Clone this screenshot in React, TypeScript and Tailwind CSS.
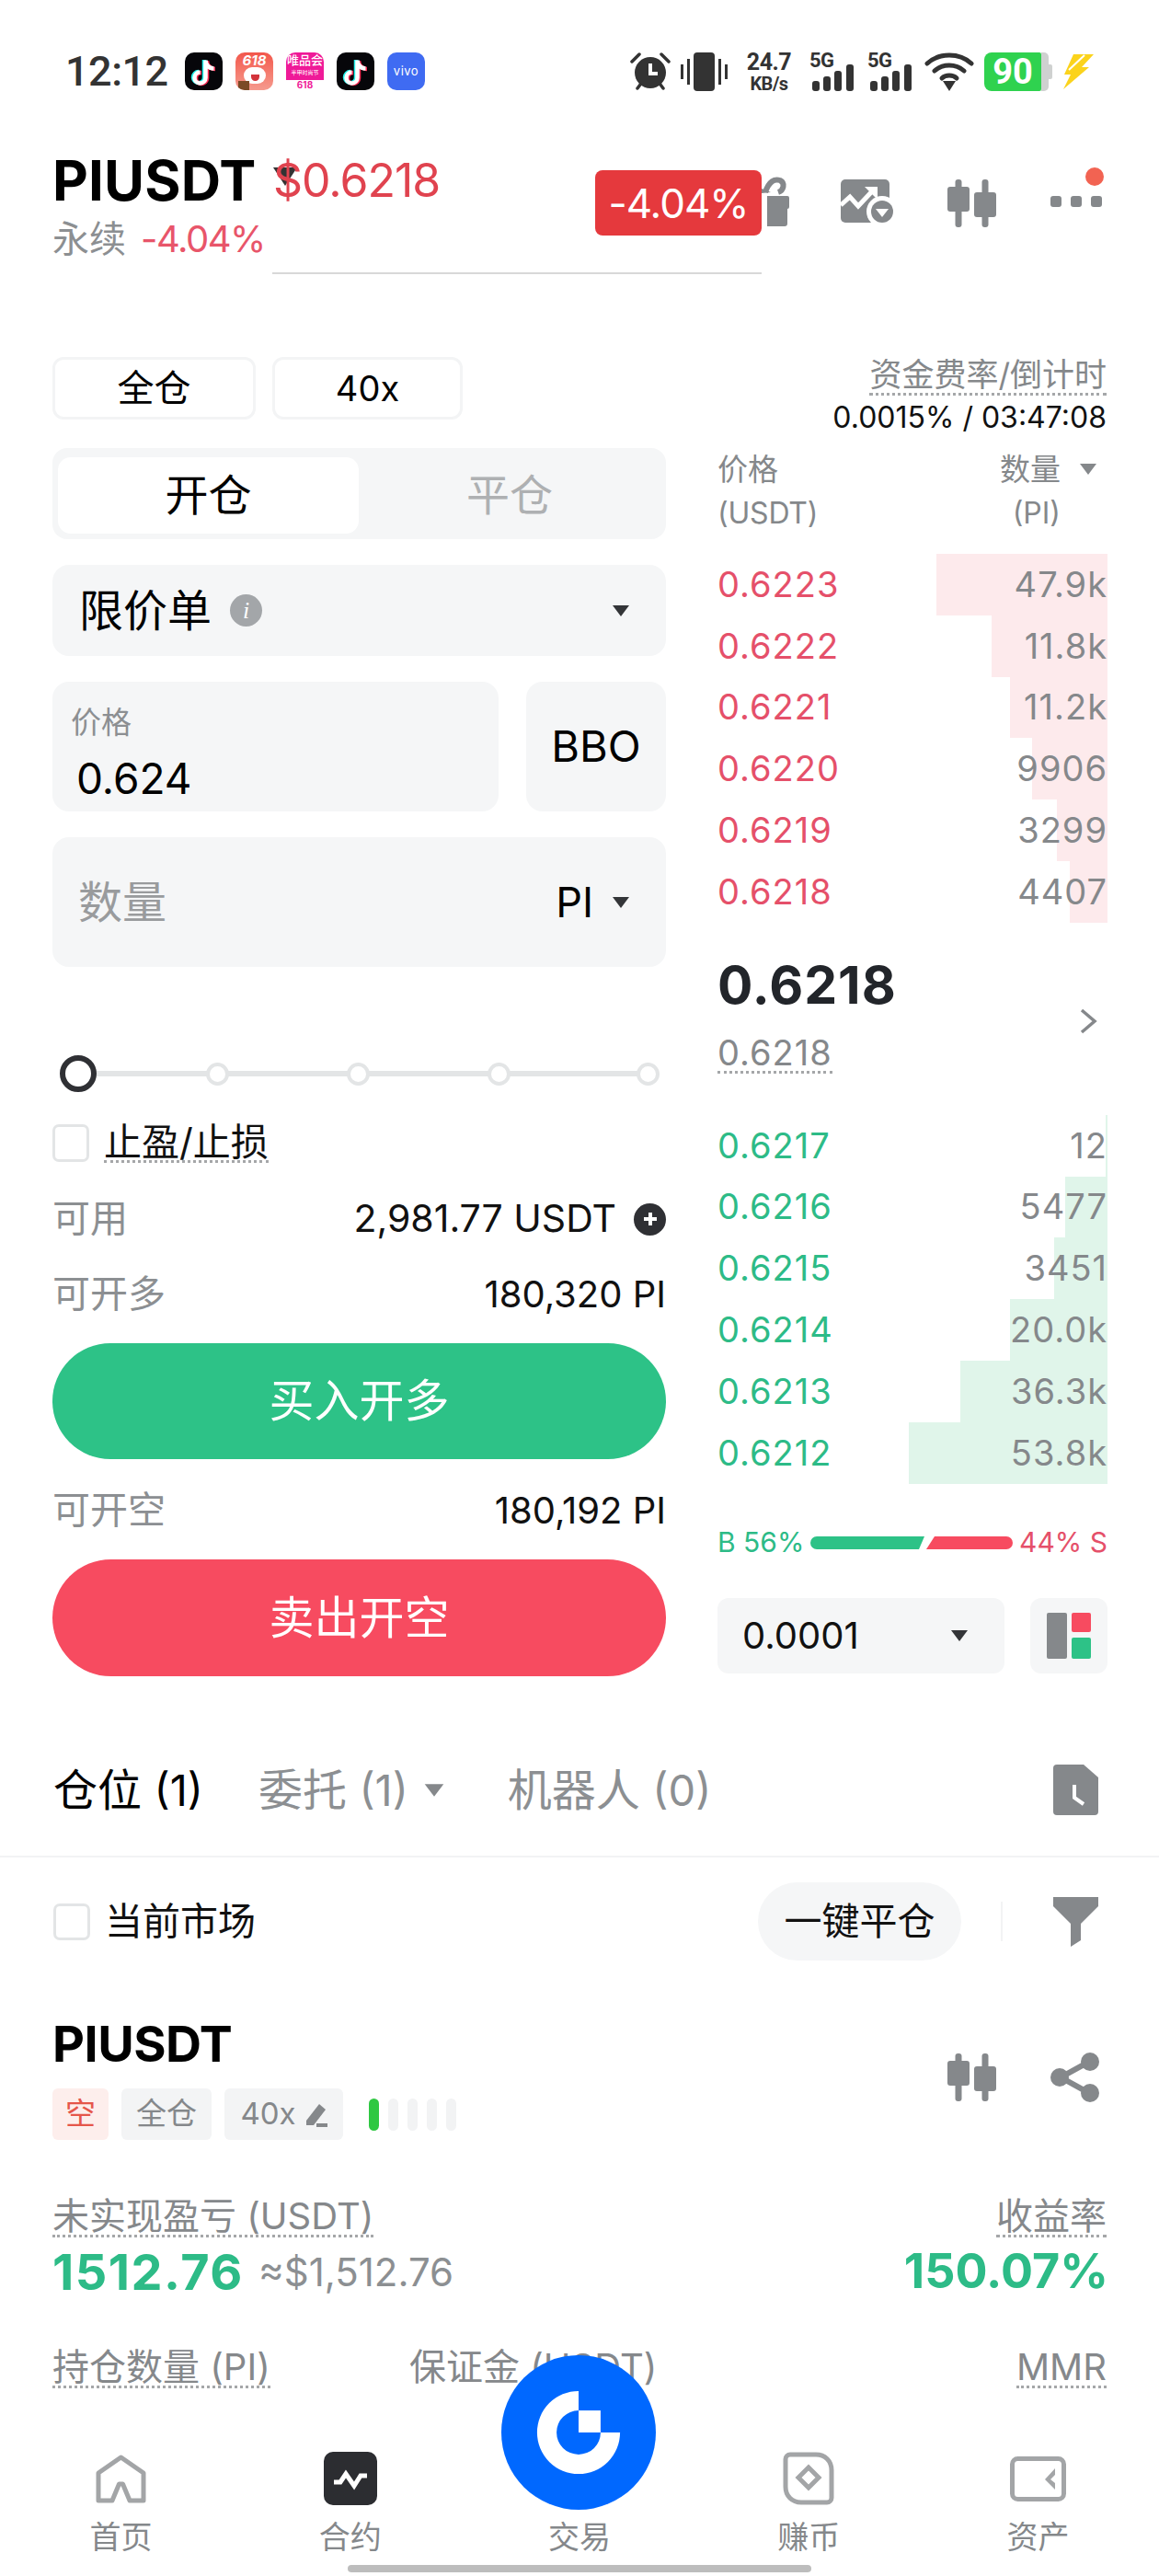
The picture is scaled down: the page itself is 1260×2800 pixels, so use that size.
import React from "react";

const Tiktok = () => (
  <svg width="41" height="41" viewBox="0 0 41 41" className="shrink-0">
    <rect width="41" height="41" rx="10" fill="#06060a" />
    <g fill="none" strokeWidth="4.5">
      <path d="M21 8V27a6 6 0 1 1-6-6M21 8c0 5 4 9 9 9" stroke="#25f4ee" />
      <path d="M24 9V28a6 6 0 1 1-6-6M24 9c0 5 4 9 9 9" stroke="#fe2c55" />
      <path d="M22.5 8.5V27.5a6 6 0 1 1-6-6M22.5 8.5c0 5 4 9 9 9" stroke="#fff" />
    </g>
  </svg>
);

const Candle = () => (
  <svg width="54" height="52" viewBox="0 0 54 52" fill="#85888b" className="shrink-0">
    <rect x="8.5" y="0" width="7" height="52" rx="3" />
    <rect x="0" y="8" width="24" height="27" rx="3" />
    <rect x="37.5" y="0" width="7" height="52" rx="3" />
    <rect x="29" y="14" width="24" height="27" rx="3" />
  </svg>
);

const Caret = ({ c = "#333538", w = 20, h = 14 }: { c?: string; w?: number; h?: number }) => (
  <svg width={w} height={h} viewBox="0 0 20 14" className="shrink-0">
    <path d="M1 1H19L10 13Z" fill={c} />
  </svg>
);

const Check = ({ s = "w-[40px] h-[41px]" }: { s?: string }) => (
  <div className={`${s} border-[3px] border-[#e3e5e6] rounded-[7px] shrink-0`} />
);

const asks = [
  ["0.6223", "47.9k", 186],
  ["0.6222", "11.8k", 126],
  ["0.6221", "11.2k", 106],
  ["0.6220", "9906", 82],
  ["0.6219", "3299", 55],
  ["0.6218", "4407", 41],
] as const;
const bids = [
  ["0.6217", "12", 2],
  ["0.6216", "5477", 46],
  ["0.6215", "3451", 58],
  ["0.6214", "20.0k", 106],
  ["0.6213", "36.3k", 160],
  ["0.6212", "53.8k", 216],
] as const;

const Row = ({ p, q, w, ask }: { p: string; q: string; w: number; ask: boolean }) => (
  <div className="relative h-[66.8px] flex items-center justify-between">
    <div
      className={`absolute right-0 top-0 bottom-0 ${ask ? "bg-[#fdeaec]" : "bg-[#e0f5ea]"}`}
      style={{ width: w }}
    />
    <span className={`relative text-[38px] tracking-[1px] ${ask ? "text-[#e5506a]" : "text-[#2dbb87]"}`}>{p}</span>
    <span className="relative text-[38px] tracking-[1px] text-[#85888b]">{q}</span>
  </div>
);

const Info = ({ l, v, extra, small }: { l: string; v: string; extra?: React.ReactNode; small?: boolean }) => (
  <div className="h-[40px] flex items-center justify-between">
    <span className="text-[41px] text-[#8c8f92]">{l}</span>
    <span className={`flex items-center text-[#111] ${small ? "text-[40px]" : "text-[41px]"}`}>
      {v}
      {extra}
    </span>
  </div>
);

const Dotted = ({ children, c = "text-[#85888b]" }: { children: React.ReactNode; c?: string }) => (
  <span className={`text-[40px] leading-[40px] ${c} border-b-[3px] border-dotted border-[#a5a7a9] inline-block`}>
    {children}
  </span>
);

const Tag = ({ children, c }: { children: React.ReactNode; c: string }) => (
  <div className={`h-[56px] rounded-[6px] flex items-center justify-center text-[33px] ${c}`}>{children}</div>
);

const NavItem = ({ icon, label }: { icon: React.ReactNode; label: string }) => (
  <div className="flex flex-col items-center">
    <div className="h-[58px] flex items-center justify-center">{icon}</div>
    <span className="mt-[20px] text-[34px] leading-[30px] text-[#85888b]">{label}</span>
  </div>
);

export default function App() {
  return (
    <div
      className="relative w-[1260px] h-[2800px] overflow-hidden bg-white text-[#111]"
      style={{ fontFamily: 'Inter, "Noto Sans CJK SC", sans-serif' }}
    >
      {/* status bar */}
      <div className="pt-[57px] pl-[71px] pr-[70px] h-[98px] flex items-start justify-between">
        <div className="flex items-center h-[41px]">
          <span className="w-[130px] text-[45px] font-medium text-[#333] tracking-[-0.5px]" style={{ fontFamily: "Roboto, sans-serif" }}>
            12:12
          </span>
          <div className="flex gap-[14px]">
            <Tiktok />
            <div className="w-[41px] h-[41px] rounded-[10px] bg-gradient-to-b from-[#f2564b] to-[#f59a8e] overflow-hidden relative flex justify-center">
              <span className="text-[15px] font-bold italic text-white leading-[18px]">618</span>
              <div className="absolute left-[9px] top-[16px] w-[24px] h-[18px] bg-white rounded-full" />
              <div className="absolute left-[17px] top-[24px] w-[9px] h-[7px] bg-[#d3343b] rounded-b-full" />
              <div className="absolute left-[3px] bottom-0 w-[12px] h-[10px] bg-[#7b4a26]" />
            </div>
            <div className="w-[41px] h-[41px] rounded-[10px] bg-white overflow-hidden flex flex-col items-center">
              <div className="w-full h-[30px] bg-[#ef1a98] flex flex-col items-center text-white">
                <span className="text-[13px] leading-[17px] font-medium whitespace-nowrap">唯品会</span>
                <span className="text-[6px] leading-[9px] whitespace-nowrap">半甲时尚节</span>
              </div>
              <span className="text-[10px] leading-[11px] font-bold text-[#ef1a98]">618</span>
            </div>
            <Tiktok />
            <div className="w-[41px] h-[41px] rounded-[10px] bg-[#3f6bf2] flex items-center justify-center text-white text-[13px] tracking-[0.5px]">
              vivo
            </div>
          </div>
        </div>
        <div className="flex items-start h-[42px] text-[#333]">
          <svg width="44" height="42" viewBox="0 0 44 42" className="shrink-0">
            <circle cx="22" cy="22" r="17" fill="#333" />
            <path d="M22 12V23H30" fill="none" stroke="#fff" strokeWidth="4" />
            <path d="M2 10L10 2M42 10L34 2M8 39L11 35M36 39L33 35" stroke="#333" strokeWidth="3.5" strokeLinecap="round" />
          </svg>
          <svg width="52" height="42" viewBox="0 0 52 42" className="ml-[10px] shrink-0">
            <rect x="15" y="0" width="23" height="42" rx="4" fill="#333" />
            <rect x="1" y="13" width="3" height="16" fill="#333" />
            <rect x="8" y="7" width="3" height="28" fill="#333" />
            <rect x="42" y="7" width="3" height="28" fill="#333" />
            <rect x="49" y="13" width="3" height="16" fill="#333" />
          </svg>
          <div className="ml-[18px] w-[54px] flex flex-col items-center font-bold" style={{ fontFamily: "Roboto, sans-serif" }}>
            <span className="text-[25px] leading-[22px] tracking-[-0.5px]">24.7</span>
            <span className="text-[20px] leading-[24px] tracking-[-0.5px]">KB/s</span>
          </div>
          {[0, 1].map((i) => (
            <div key={i} className={`relative w-[50px] h-[42px] ${i ? "ml-[13px]" : "ml-[17px]"}`}>
              <span className="absolute left-0 top-[-3px] text-[22px] font-bold leading-[24px] tracking-[-0.5px]" style={{ fontFamily: "Roboto, sans-serif" }}>
                5G
              </span>
              <svg width="50" height="42" viewBox="0 0 50 42" className="absolute left-0 top-0">
                <rect x="3" y="31" width="8" height="11" rx="3" fill="#333" />
                <rect x="15" y="26" width="8" height="16" rx="3" fill="#333" />
                <rect x="27" y="20" width="8" height="22" rx="3" fill="#333" />
                <rect x="40" y="13" width="8" height="29" rx="3" fill="#333" />
              </svg>
            </div>
          ))}
          <svg width="54" height="42" viewBox="0 0 54 42" className="ml-[12px] shrink-0">
            <g fill="none" stroke="#333" strokeWidth="5" strokeLinecap="round">
              <path d="M3 12C16 0 38 0 51 12" />
              <path d="M11 20C20 12 34 12 43 20" />
              <path d="M19 28C23 24 31 24 35 28" />
            </g>
            <path d="M20 31H34L27 42Z" fill="#333" />
          </svg>
          <div className="ml-[11px] relative w-[75px] h-[42px] flex">
            <div className="w-[62px] h-[42px] rounded-l-[8px] rounded-r-[2px] bg-[#2fd24f] flex items-center justify-center text-white text-[38px] font-bold leading-none" style={{ fontFamily: "Roboto, sans-serif" }}>
              90
            </div>
            <div className="w-[8px] h-[42px] bg-[#cfd1d0] rounded-r-[5px]" />
            <div className="w-[4px] h-[16px] mt-[13px] bg-[#cfd1d0] rounded-r-[2px]" />
          </div>
          <svg width="36" height="42" viewBox="0 0 36 42" className="ml-[9px] shrink-0">
            <path d="M13 2H35L22 16H30L2 40L10 24H3Z" fill="#fbd31c" />
            <path d="M8 19L25 3" stroke="#fff" strokeWidth="2" />
          </svg>
        </div>
      </div>

      {/* header */}
      <div className="relative mt-[64px] pl-[57px] pr-[62px] h-[130px] flex justify-between">
        <div>
          <div className="flex items-center h-[68px]">
            <span className="w-[240px] text-[60px] font-bold text-black tracking-[0.2px] leading-[68px]">PIUSDT</span>
            <div className="relative">
              <svg width="26" height="20" viewBox="0 0 26 20" className="absolute left-0 top-[20px]">
                <path d="M0 0H26L13 20Z" fill="#333" />
              </svg>
              <span className="relative text-[50px] text-[#e0434f] tracking-[-1px] leading-[68px]">$0.6218</span>
            </div>
          </div>
          <div className="flex items-center mt-[5px] h-[50px] text-[40px] leading-[50px]">
            <span className="text-[#8c8f92]">永续</span>
            <span className="ml-[16px] text-[#e8556a] tracking-[-1.5px]">-4.04%</span>
          </div>
        </div>
        <div className="flex items-start pt-[33px]">
          <svg width="60" height="60" viewBox="0 0 60 60" className="shrink-0 -mt-[6px]">
            <path d="M36 24H58a2 2 0 0 1 2 2V36a2 2 0 0 1-2 2V54a3 3 0 0 1-3 3H36Z" fill="#85888b" />
            <path d="M34 20C38 8 44 5 50 7C56 10 54 18 48 20" fill="none" stroke="#85888b" strokeWidth="6" />
            <path d="M20 12L40 20L20 22Z" fill="#85888b" />
          </svg>
          <svg width="60" height="54" viewBox="0 0 60 54" className="ml-[56px] shrink-0">
            <rect x="0" y="0" width="53" height="47" rx="5" fill="#85888b" />
            <path d="M0 28L10 19L19 29L35 12" fill="none" stroke="#fff" strokeWidth="5" />
            <path d="M26 8H40V22Z" fill="#fff" />
            <circle cx="45" cy="35" r="17" fill="#fff" />
            <circle cx="45" cy="35" r="12" fill="#85888b" />
            <path d="M38 32H52L45 41Z" fill="#fff" />
          </svg>
          <div className="ml-[56px]">
            <Candle />
          </div>
          <div className="ml-[58px] relative w-[56px] h-[50px]">
            <div className="absolute left-[38px] top-[-13px] w-[20px] h-[20px] rounded-full bg-[#f26352]" />
            <div className="absolute left-0 top-[18px] flex gap-[10px]">
              <div className="w-[12px] h-[12px] rounded-[3px] bg-[#85888b]" />
              <div className="w-[12px] h-[12px] rounded-[3px] bg-[#85888b]" />
              <div className="w-[12px] h-[12px] rounded-[3px] bg-[#85888b]" />
            </div>
          </div>
        </div>
        <div className="absolute left-[647px] top-[23px] w-[181px] h-[71px] rounded-[8px] bg-[#e5393d] flex items-center justify-center text-white text-[44px] tracking-[-1px]">
          -4.04%
        </div>
        <div className="absolute left-[296px] top-[134px] w-[532px] h-[2px] bg-[#d8d8d8]" />
      </div>

      {/* margin row */}
      <div className="mt-[94px] pl-[57px] pr-[57px] flex justify-between items-start">
        <div className="flex gap-[18px] pt-[2px]">
          <div className="w-[221px] h-[68px] rounded-[12px] border-[3px] border-[#f3f4f5] flex items-center justify-center text-[40px] text-black">全仓</div>
          <div className="w-[207px] h-[68px] rounded-[12px] border-[3px] border-[#f3f4f5] flex items-center justify-center text-[38px] text-black">40x</div>
        </div>
        <div className="flex flex-col items-end">
          <Dotted>
            <span className="text-[35px]">资金费率/倒计时</span>
          </Dotted>
          <span className="mt-[6px] text-[32px] leading-[36px] text-[#111]">0.0015% / 03:47:08</span>
        </div>
      </div>

      {/* trading area */}
      <div className="mt-[15px] pl-[57px] pr-[56px] flex justify-between items-start">
        {/* form */}
        <div className="w-[667px] flex flex-col">
          <div className="h-[99px] rounded-[16px] bg-[#f5f6f7] p-[10px_6px] flex">
            <div className="w-[327px] h-[83px] rounded-[14px] bg-white flex items-center justify-center text-[47px] text-black">开仓</div>
            <div className="flex-1 h-[83px] flex items-center justify-center text-[47px] text-[#aeb0b2]">平仓</div>
          </div>
          <div className="mt-[28px] h-[99px] rounded-[18px] bg-[#f5f6f7] pl-[29px] pr-[39px] flex items-center">
            <span className="text-[48px] text-black">限价单</span>
            <div className="ml-[20px] w-[35px] h-[35px] rounded-full bg-[#a3a6a9] flex items-center justify-center text-white text-[26px] italic" style={{ fontFamily: '"Liberation Serif", serif' }}>
              i
            </div>
            <div className="ml-auto">
              <Caret />
            </div>
          </div>
          <div className="mt-[28px] flex gap-[30px]">
            <div className="w-[485px] h-[141px] rounded-[18px] bg-[#f5f6f7] pl-[20px] flex flex-col">
              <span className="mt-[24px] text-[33px] leading-[40px] text-[#8c8f92]">价格</span>
              <span className="mt-[16px] ml-[6px] text-[46px] leading-[50px] text-black">0.624</span>
            </div>
            <div className="flex-1 h-[141px] rounded-[18px] bg-[#f5f6f7] flex items-center justify-center text-[47px] text-black">BBO</div>
          </div>
          <div className="mt-[28px] h-[141px] rounded-[18px] bg-[#f5f6f7] pl-[28px] pr-[39px] flex items-center">
            <span className="text-[48px] text-[#999b9d]">数量</span>
            <span className="ml-auto text-[45px] text-black">PI</span>
            <div className="ml-[20px]">
              <Caret />
            </div>
          </div>

          {/* slider */}
          <div className="relative mt-[96px] ml-[8px] mr-[7px] h-[40px] flex items-center justify-between">
            <div className="absolute left-[20px] right-[10px] top-[17px] h-[6px] bg-[#e3e5e6]" />
            <div className="relative w-[40px] h-[40px] rounded-full border-[6px] border-[#2f3034] bg-white" />
            {[0, 1, 2, 3].map((i) => (
              <div key={i} className={`relative w-[25px] h-[25px] rounded-full border-[4px] border-[#e3e5e6] bg-white ${i === 3 ? "" : "-translate-x-[9px]"}`} />
            ))}
          </div>

          <div className="mt-[35px] flex items-center h-[41px]">
            <Check />
            <span className="ml-[16px] text-[41px] leading-[40px] text-[#111] border-b-[3px] border-dotted border-[#a5a7a9]">止盈/止损</span>
          </div>
          <div className="mt-[42px]">
            <Info
              l="可用"
              v="2,981.77 USDT"
              extra={
                <span className="ml-[19px] w-[35px] h-[35px] rounded-full bg-[#2f3034] flex items-center justify-center">
                  <svg width="20" height="20" viewBox="0 0 20 20">
                    <path d="M10 3V17M3 10H17" stroke="#fff" strokeWidth="4" />
                  </svg>
                </span>
              }
            />
          </div>
          <div className="mt-[42px]">
            <Info l="可开多" v="180,320 PI" small />
          </div>
          <div className="mt-[33px] h-[126px] rounded-full bg-[#2dc287] flex items-center justify-center text-white text-[49px]">买入开多</div>
          <div className="mt-[36px]">
            <Info l="可开空" v="180,192 PI" small />
          </div>
          <div className="mt-[33px] h-[127px] rounded-full bg-[#f74b60] flex items-center justify-center text-white text-[49px]">卖出开空</div>
        </div>

        {/* order book */}
        <div className="w-[424px] flex flex-col">
          <div className="h-[115px] flex justify-between text-[33px] leading-[40px] text-[#85888b] pr-[11px]">
            <div className="pt-[3px] flex flex-col">
              <span>价格</span>
              <span className="mt-[8px] text-[32px] tracking-[-0.2px]">(USDT)</span>
            </div>
            <div className="pt-[3px] flex flex-col items-end">
              <div className="flex items-center gap-[20px]">
                <span>数量</span>
                <Caret c="#85888b" />
              </div>
              <span className="mt-[8px] mr-[40px] text-[32px]">(PI)</span>
            </div>
          </div>
          <div className="flex flex-col">
            {asks.map(([p, q, w]) => (
              <Row key={p} p={p} q={q} w={w} ask />
            ))}
          </div>
          <div className="relative h-[209px]">
            <div className="mt-[38px] text-[57px] leading-[60px] font-bold tracking-[1px] text-[#22252a]">0.6218</div>
            <span className="mt-[23px] inline-block text-[38px] leading-[40px] tracking-[1px] text-[#85888b] border-b-[3px] border-dotted border-[#a5a7a9]">0.6218</span>
            <svg width="20" height="28" viewBox="0 0 20 28" className="absolute right-[11px] top-[93px]">
              <path d="M3 2L17 14L3 26" fill="none" stroke="#85888b" strokeWidth="3.5" />
            </svg>
          </div>
          <div className="flex flex-col">
            {bids.map(([p, q, w]) => (
              <Row key={p} p={p} q={q} w={w} ask={false} />
            ))}
          </div>
          <div className="mt-[50px] h-[28px] flex items-center justify-between text-[30px]">
            <span className="text-[#2dbb87] whitespace-nowrap">B 56%</span>
            <svg width="222" height="16" viewBox="0 0 222 16" className="shrink-0">
              <path d="M8 1H125L119 15H8a7 7 0 0 1 0-14Z" fill="#2dc287" />
              <path d="M136 1H214a7 7 0 0 1 0 14H127Z" fill="#f74b60" />
            </svg>
            <span className="text-[#e5506a] whitespace-nowrap">44% S</span>
          </div>
          <div className="mt-[46px] flex justify-between">
            <div className="w-[312px] h-[82px] rounded-[12px] bg-[#f5f6f7] pl-[27px] pr-[39px] flex items-center justify-between text-[40px] text-[#111]">
              0.0001
              <Caret />
            </div>
            <div className="w-[84px] h-[82px] rounded-[12px] bg-[#f5f6f7] flex items-center justify-center">
              <svg width="48" height="50" viewBox="0 0 48 50">
                <rect x="0" y="0" width="22" height="50" rx="2" fill="#85888b" />
                <rect x="27" y="0" width="21" height="21" rx="2" fill="#f74b60" />
                <rect x="27" y="27" width="21" height="23" rx="2" fill="#2dc287" />
              </svg>
            </div>
          </div>
        </div>
      </div>

      {/* tabs */}
      <div className="mt-[96px] pl-[58px] pr-[66px] h-[55px] flex items-center">
        <span className="text-[48px] text-black">仓位 <span className="text-[47px]">(1)</span></span>
        <span className="ml-[60px] text-[48px] text-[#8c8f92]">委托 <span className="text-[47px]">(1)</span></span>
        <div className="ml-[16px]">
          <Caret c="#85888b" w={24} h={16} />
        </div>
        <span className="ml-[68px] text-[48px] text-[#8c8f92]">机器人 <span className="text-[47px]">(0)</span></span>
        <svg width="49" height="55" viewBox="0 0 49 55" className="ml-auto shrink-0">
          <path d="M4 0H33L49 14V51a4 4 0 0 1-4 4H4a4 4 0 0 1-4-4V4a4 4 0 0 1 4-4Z" fill="#85888b" />
          <path d="M23 22V36L33 43" fill="none" stroke="#fff" strokeWidth="4" />
        </svg>
      </div>
      <div className="mt-[44px] h-[2px] bg-[#f2f3f4]" />

      {/* filter row */}
      <div className="mt-[27px] pl-[58px] pr-[66px] h-[85px] flex items-center">
        <Check s="w-[40px] h-[40px]" />
        <span className="ml-[16px] text-[41px] text-[#111]">当前市场</span>
        <div className="ml-auto w-[221px] h-[85px] rounded-full bg-[#f5f6f7] flex items-center justify-center text-[41px] text-[#111]">一键平仓</div>
        <div className="ml-[43px] w-[2px] h-[43px] bg-[#f2f3f4]" />
        <svg width="49" height="54" viewBox="0 0 49 54" className="ml-[55px] shrink-0">
          <path d="M0 0H49V10L30 29V47L19 54V29L0 10Z" fill="#85888b" />
        </svg>
      </div>

      {/* position */}
      <div className="mt-[65px] pl-[57px] pr-[64px] flex justify-between items-start">
        <div>
          <div className="text-[54px] leading-[52px] font-bold text-black tracking-[-0.5px]">PIUSDT</div>
          <div className="mt-[22px] flex items-center">
            <Tag c="w-[61px] bg-[#fdeeec] text-[#e5564a]">空</Tag>
            <div className="ml-[14px]">
              <Tag c="w-[98px] bg-[#f3f4f5] text-[#85888b]">全仓</Tag>
            </div>
            <div className="ml-[14px]">
              <Tag c="w-[129px] bg-[#f3f4f5] text-[#85888b] gap-[8px]">
                40x
                <svg width="26" height="28" viewBox="0 0 26 28">
                  <path d="M3 21L17 3L24 9L11 26H3Z" fill="#85888b" />
                  <path d="M14 26H26" stroke="#85888b" strokeWidth="4" />
                </svg>
              </Tag>
            </div>
            <div className="ml-[28px] flex gap-[10px]">
              <div className="w-[11px] h-[35px] rounded-full bg-[#2fc842]" />
              {[0, 1, 2, 3].map((i) => (
                <div key={i} className="w-[11px] h-[35px] rounded-full bg-[#f2f3f4]" />
              ))}
            </div>
          </div>
        </div>
        <div className="flex items-center mt-[34px]">
          <Candle />
          <svg width="54" height="56" viewBox="0 0 54 56" className="ml-[58px] shrink-0">
            <path d="M42 11L11 28L42 45" fill="none" stroke="#85888b" strokeWidth="6" />
            <circle cx="43" cy="11" r="10" fill="#85888b" />
            <circle cx="10" cy="28" r="10" fill="#85888b" />
            <circle cx="43" cy="45" r="10" fill="#85888b" />
          </svg>
        </div>
      </div>

      <div className="mt-[63px] pl-[57px] pr-[57px] flex justify-between items-start">
        <Dotted>未实现盈亏 (USDT)</Dotted>
        <Dotted>收益率</Dotted>
      </div>
      <div className="mt-[11px] pl-[57px] pr-[55px] h-[52px] flex items-center justify-between">
        <div className="flex items-center">
          <span className="text-[54px] font-bold text-[#2dbb87] tracking-[1.5px]">1512.76</span>
          <span className="ml-[16px] text-[42px] text-[#8c8f92]">≈$1,512.76</span>
        </div>
        <span className="text-[52px] font-bold text-[#2dbb87]">150.07%</span>
      </div>
      <div className="mt-[58px] pl-[57px] pr-[57px] flex items-start">
        <div className="w-[388px]">
          <Dotted>持仓数量 (PI)</Dotted>
        </div>
        <span className="text-[40px] leading-[40px] text-[#85888b]">保证金 (USDT)</span>
        <div className="ml-auto">
          <Dotted>MMR</Dotted>
        </div>
      </div>

      {/* bottom nav */}
      <div className="absolute left-0 right-0 top-[2665px] h-[135px] bg-white px-[7px] grid grid-cols-5">
        <NavItem
          label="首页"
          icon={
            <svg width="55" height="53" viewBox="0 0 55 53">
              <path d="M3 20L27.5 3L52 20V50H37L29.5 32H25.5L18 50H3Z" fill="none" stroke="#a3a5a7" strokeWidth="5" strokeLinejoin="round" />
            </svg>
          }
        />
        <NavItem
          label="合约"
          icon={
            <svg width="58" height="58" viewBox="0 0 58 58">
              <rect width="58" height="58" rx="10" fill="#2c2d31" />
              <path d="M11 33H18L24 24L33 37L40 26H47" fill="none" stroke="#fff" strokeWidth="5" />
            </svg>
          }
        />
        <div className="flex flex-col items-center">
          <div className="h-[58px]" />
          <span className="mt-[20px] text-[34px] leading-[30px] text-[#85888b]">交易</span>
        </div>
        <NavItem
          label="赚币"
          icon={
            <svg width="56" height="58" viewBox="0 0 56 58">
              <path d="M8 3H36C46 3 53 10 53 20V50a5 5 0 0 1-5 5H20C10 55 3 48 3 38V8a5 5 0 0 1 5-5Z" fill="none" stroke="#a3a5a7" strokeWidth="5" />
              <path d="M28 17L39 28L28 39L17 28Z" fill="none" stroke="#a3a5a7" strokeWidth="5" />
            </svg>
          }
        />
        <NavItem
          label="资产"
          icon={
            <svg width="61" height="49" viewBox="0 0 61 49">
              <rect x="2.5" y="2.5" width="56" height="44" rx="6" fill="none" stroke="#a3a5a7" strokeWidth="5" />
              <path d="M49 13L38 25L49 36V29L44 25L49 20Z" fill="#a3a5a7" />
            </svg>
          }
        />
      </div>

      {/* trade button over the nav */}
      <div className="absolute left-[545px] top-[2560px] w-[168px] h-[168px] rounded-full bg-[#0068ff] flex items-center justify-center">
        <svg width="92" height="92" viewBox="0 0 100 100">
          <path d="M50 1A49 49 0 1 0 99 50H76A26 26 0 1 1 50 24Z" fill="#fff" />
          <rect x="50" y="24" width="26" height="26" fill="#fff" />
        </svg>
      </div>
      <div className="absolute left-[378px] top-[2788px] w-[504px] h-[8px] rounded-full bg-[#bdbdbd]" />
    </div>
  );
}
